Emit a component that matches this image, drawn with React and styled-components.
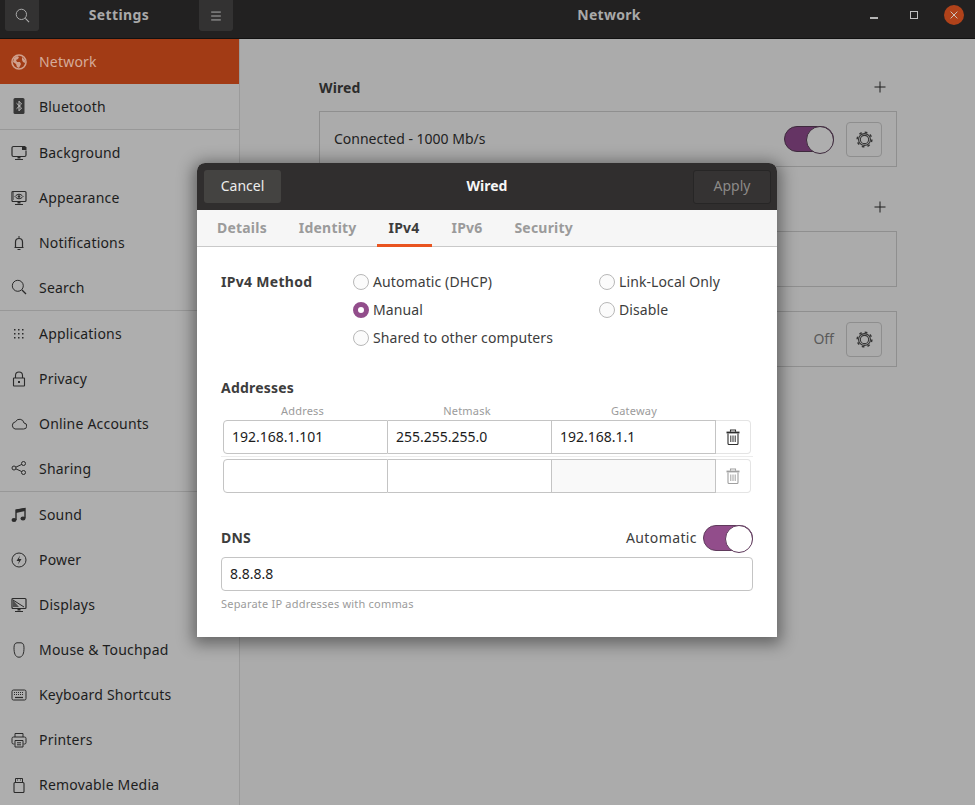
import styled, { createGlobalStyle } from 'styled-components';

const GlobalStyle = createGlobalStyle`
  html, body {
    margin: 0;
    padding: 0;
    background: #ababab;
  }
  * {
    box-sizing: border-box;
  }
`;

const Svg = ({ size = 16, children }) => (
  <svg width={size} height={size} viewBox="0 0 16 16" fill="none" stroke="currentColor" strokeWidth="1">
    {children}
  </svg>
);

const icons = {
  network: (
    <>
      <circle cx="8" cy="8" r="7" strokeWidth="1.6" />
      <path d="M3 4l3-2 2 1-1 2-2 1 1 2 3 0 1 2-2 4-2-1-1-3-3-2z" fill="currentColor" stroke="none" />
      <path d="M11 3l3 3 0 3-2-1-1-2z" fill="currentColor" stroke="none" />
    </>
  ),
  bluetooth: (
    <>
      <rect x="2.5" y="0" width="11" height="16" rx="1.5" fill="#2b2b2b" stroke="none" />
      <path d="M5.5 5.2L10.5 10 8 12.8V3.2L10.5 6 5.5 10.8" stroke="#cfcfcf" strokeWidth="0.9" />
    </>
  ),
  background: (
    <>
      <path d="M11 1.5H2.5a1.5 1.5 0 0 0-1.5 1.5v7a1.5 1.5 0 0 0 1.5 1.5h11a1.5 1.5 0 0 0 1.5-1.5V5.5" strokeWidth="1.2" />
      <path d="M11 1h3l1.500 1.500V5h-4.500z" fill="currentColor" stroke="none" />
      <path d="M6.500 11.500h3v2h-3z" fill="currentColor" stroke="none" />
      <path d="M4 14h8v1H4z" fill="currentColor" stroke="none" />
    </>
  ),
  appearance: (
    <>
      <rect x="1" y="1.500" width="14" height="10" rx="1" strokeWidth="1.200" />
      <path d="M4 6.500c2.500-3 5.500-3 8 0-2.500 3-5.500 3-8 0z" />
      <circle cx="8" cy="6.500" r="1.300" fill="currentColor" stroke="none" />
      <path d="M2 3h1M2 5h1M2 7h1M2 9h1" />
      <path d="M6.500 11.500h3v2h-3zM4 14h8v1H4z" fill="currentColor" stroke="none" />
    </>
  ),
  bell: (
    <>
      <path d="M3.500 12.500h9M4.500 12V7a3.500 3.500 0 0 1 7 0v5" strokeWidth="1.200" />
      <path d="M7 2h2M6.500 14.500h3" strokeWidth="1.200" />
    </>
  ),
  search: (
    <>
      <circle cx="6.800" cy="6.800" r="5.500" strokeWidth="1" />
      <path d="M11 11l4 4" strokeWidth="1.200" />
    </>
  ),
  apps: (
    <path
      d="M3 3h1.500v1.500H3zM7 3h1.500v1.500H7zM11 3h1.500v1.500H11zM3 7h1.500v1.500H3zM7 7h1.500v1.500H7zM11 7h1.500v1.500H11zM3 11h1.500v1.500H3zM7 11h1.500v1.500H7zM11 11h1.500v1.500H11z"
      fill="currentColor"
      stroke="none"
    />
  ),
  lock: (
    <>
      <rect x="2.500" y="7" width="11" height="8" rx=".5" strokeWidth="1.100" />
      <path d="M4.500 7V4.500a3.500 3.500 0 0 1 7 0V7" strokeWidth="1.100" />
      <rect x="7" y="10" width="2" height="2" fill="currentColor" stroke="none" />
    </>
  ),
  cloud: (
    <path d="M4 13h8.500a3 3 0 0 0 .5-6 4.500 4.500 0 0 0-8.500-1.200A3.700 3.700 0 0 0 4 13z" strokeWidth="1" />
  ),
  share: (
    <>
      <circle cx="3" cy="8" r="2" />
      <circle cx="12.500" cy="3.500" r="2" />
      <circle cx="12.500" cy="12.500" r="2" />
      <path d="M4.800 7.200l6-2.800M4.800 8.800l6 2.800" />
    </>
  ),
  music: (
    <>
      <path d="M5 13V3.200L14 1.500V11" strokeWidth="1.400" />
      <path d="M5 2.800L14 1v3L5 6z" fill="currentColor" stroke="none" />
      <ellipse cx="3" cy="13" rx="2.500" ry="2" fill="currentColor" stroke="none" />
      <ellipse cx="12" cy="11.500" rx="2.500" ry="2" fill="currentColor" stroke="none" />
    </>
  ),
  power: (
    <>
      <circle cx="8" cy="8" r="7" strokeWidth="1" />
      <path d="M9 3.500L5.500 9H8l-1 3.500L10.500 7H8z" fill="currentColor" stroke="none" />
    </>
  ),
  display: (
    <>
      <rect x="1" y="1.500" width="14" height="10" rx="1" strokeWidth="1.200" />
      <path d="M2 3l6 7H2z" fill="currentColor" stroke="none" opacity=".7" />
      <path d="M2 3l11 7" />
      <path d="M6.500 11.500h3v2h-3zM4 14h8v1H4z" fill="currentColor" stroke="none" />
    </>
  ),
  mouse: (
    <path d="M6 .8h4c2 0 3 2 3 5 0 5-1 9.400-5 9.400S3 10.800 3 5.800c0-3 1-5 3-5z" strokeWidth="1" />
  ),
  keyboard: (
    <>
      <rect x="1" y="3" width="14" height="10" rx="1.500" strokeWidth="1" />
      <path d="M3 5.500h10M3 7.500h10" strokeDasharray="1 1" />
      <path d="M4 10.500h8" strokeWidth="1.200" />
    </>
  ),
  printer: (
    <>
      <path d="M4 5V1.500h8V5" />
      <path d="M3.500 12H2.500a1.500 1.500 0 0 1-1.500-1.500V6.500A1.500 1.500 0 0 1 2.500 5h11A1.500 1.500 0 0 1 15 6.500v4a1.500 1.500 0 0 1-1.500 1.500h-1" />
      <path d="M4 8.500h8v6.500H4z" />
      <path d="M6 10.800h4M6 12.800h4" />
    </>
  ),
  usb: (
    <>
      <rect x="3" y="5.500" width="10" height="10" rx="1" strokeWidth="1.100" />
      <path d="M4.500 5.500V1.500h7v4" />
      <path d="M6 3h1M9 3h1" />
    </>
  ),
  menu: <path d="M2.500 3.500h11M2.500 8h11M2.500 12.500h11" strokeWidth="1.100" />,
  plus: <path d="M8 2.500v11M2.500 8h11" strokeWidth="1" />,
  gear: (
    <>
      <circle cx="8" cy="8" r="6.900" strokeWidth="1.400" strokeDasharray="2.500 2.920" />
      <circle cx="8" cy="8" r="5.600" strokeWidth="1.100" />
      <circle cx="8" cy="8" r="3.900" strokeWidth="1" />
    </>
  ),
  trash: (
    <>
      <path d="M1.500 3.500h13" strokeWidth="1.800" />
      <path d="M5.500 2.800V1h5v1.800" strokeWidth="1.100" />
      <path d="M3 4.500v10a1 1 0 0 0 1 1h8a1 1 0 0 0 1-1v-10" strokeWidth="1.100" />
      <path d="M5.800 6.500v6.500M8 6.500v6.500M10.200 6.500v6.500" strokeWidth="1" />
    </>
  ),
  close: <path d="M3.500 3.500l9 9M12.500 3.500l-9 9" strokeWidth="1.300" />,
};

const Icon = ({ name, size }) => <Svg size={size}>{icons[name]}</Svg>;

const sideItems = [
  { icon: 'network', label: 'Network', active: true },
  { icon: 'bluetooth', label: 'Bluetooth', divider: true },
  { icon: 'background', label: 'Background' },
  { icon: 'appearance', label: 'Appearance' },
  { icon: 'bell', label: 'Notifications' },
  { icon: 'search', label: 'Search', divider: true },
  { icon: 'apps', label: 'Applications' },
  { icon: 'lock', label: 'Privacy' },
  { icon: 'cloud', label: 'Online Accounts' },
  { icon: 'share', label: 'Sharing', divider: true },
  { icon: 'music', label: 'Sound' },
  { icon: 'power', label: 'Power' },
  { icon: 'display', label: 'Displays' },
  { icon: 'mouse', label: 'Mouse & Touchpad' },
  { icon: 'keyboard', label: 'Keyboard Shortcuts' },
  { icon: 'printer', label: 'Printers' },
  { icon: 'usb', label: 'Removable Media' },
];

function App() {
  return (
    <Shell>
      <GlobalStyle />
      <TitleBar>
        <TitleLeft>
          <HeaderButton><Icon name="search" size={15} /></HeaderButton>
          <AppTitle>Settings</AppTitle>
          <HeaderButton><Icon name="menu" size={14} /></HeaderButton>
        </TitleLeft>
        <TitleRight>
          <PanelTitle>Network</PanelTitle>
          <WindowButtons>
            <MinimizeMark />
            <MaximizeMark />
            <CloseButton><Icon name="close" size={12} /></CloseButton>
          </WindowButtons>
        </TitleRight>
      </TitleBar>
      <Body>
        <Sidebar>
          {sideItems.map(item => (
            <SideRow key={item.label} $active={item.active} $divider={item.divider}>
              <SideIcon><Icon name={item.icon} /></SideIcon>
              {item.label}
            </SideRow>
          ))}
        </Sidebar>
        <Panel>
          <SectionHead>
            <SectionTitle>Wired</SectionTitle>
            <PlusIcon><Icon name="plus" size={16} /></PlusIcon>
          </SectionHead>
          <Frame>
            <FrameLabel>Connected - 1000 Mb/s</FrameLabel>
            <Toggle $dim />
            <GearButton><Icon name="gear" size={17} /></GearButton>
          </Frame>
          <SectionHead $spaced>
            <PlusIcon><Icon name="plus" size={16} /></PlusIcon>
          </SectionHead>
          <Frame />
          <Frame $spaced>
            <OffLabel>Off</OffLabel>
            <GearButton><Icon name="gear" size={17} /></GearButton>
          </Frame>
        </Panel>
      </Body>

      <Dialog>
        <DialogBar>
          <CancelButton>Cancel</CancelButton>
          <DialogTitle>Wired</DialogTitle>
          <ApplyButton>Apply</ApplyButton>
        </DialogBar>
        <Tabs>
          <Tab>Details</Tab>
          <Tab>Identity</Tab>
          <Tab $active>IPv4</Tab>
          <Tab>IPv6</Tab>
          <Tab>Security</Tab>
        </Tabs>
        <DialogBody>
          <MethodRow>
            <MethodLabel>IPv4 Method</MethodLabel>
            <RadioGrid>
              <RadioItem><Radio /><RadioText>Automatic (DHCP)</RadioText></RadioItem>
              <RadioItem><Radio /><RadioText>Link-Local Only</RadioText></RadioItem>
              <RadioItem><Radio $checked /><RadioText>Manual</RadioText></RadioItem>
              <RadioItem><Radio /><RadioText>Disable</RadioText></RadioItem>
              <RadioItem><Radio /><RadioText>Shared to other computers</RadioText></RadioItem>
            </RadioGrid>
          </MethodRow>

          <AddressHeading>Addresses</AddressHeading>
          <ColumnHeads>
            <ColumnHead>Address</ColumnHead>
            <ColumnHead>Netmask</ColumnHead>
            <ColumnHead>Gateway</ColumnHead>
          </ColumnHeads>
          <AddressRow>
            <Cell>192.168.1.101</Cell>
            <Cell>255.255.255.0</Cell>
            <Cell>192.168.1.1</Cell>
            <TrashCell><Icon name="trash" size={16} /></TrashCell>
          </AddressRow>
          <RowRule />
          <AddressRow>
            <Cell />
            <Cell />
            <Cell $disabled />
            <TrashCell $disabled><Icon name="trash" size={16} /></TrashCell>
          </AddressRow>

          <DnsHead>
            <BoldLabel>DNS</BoldLabel>
            <AutoWrap>
              <AutoText>Automatic</AutoText>
              <Toggle />
            </AutoWrap>
          </DnsHead>
          <DnsInput>8.8.8.8</DnsInput>
          <Hint>Separate IP addresses with commas</Hint>
        </DialogBody>
      </Dialog>
    </Shell>
  );
}

const Shell = styled.div`
  position: relative;
  width: 975px;
  height: 805px;
  overflow: hidden;
  display: flex;
  flex-direction: column;
  font-family: 'Noto Sans', 'Open Sans', sans-serif;
  font-size: 14px;
  background: #ababab;
`;

const TitleBar = styled.div`
  display: flex;
  flex: none;
  height: 39px;
  background: #222121;
  border-bottom: 1px solid #111111;
`;

const TitleLeft = styled.div`
  display: flex;
  justify-content: space-between;
  width: 240px;
  padding: 0 7px 0 5px;
`;

const HeaderButton = styled.div`
  display: flex;
  align-items: center;
  justify-content: center;
  width: 34px;
  height: 31px;
  background: #333232;
  border-radius: 0 0 3px 3px;
  color: #b0b0b0;
`;

const AppTitle = styled.div`
  line-height: 30px;
  font-weight: 700;
  font-size: 14px;
  color: #a9a9a9;
  letter-spacing: 0.4px;
`;

const TitleRight = styled.div`
  position: relative;
  flex: 1;
  display: flex;
  justify-content: flex-end;
  align-items: center;
`;

const PanelTitle = styled.div`
  position: absolute;
  left: 3px;
  right: 0;
  top: 0;
  line-height: 30px;
  text-align: center;
  font-weight: 700;
  font-size: 14px;
  color: #a9a9a9;
  letter-spacing: 0.3px;
`;

const WindowButtons = styled.div`
  display: flex;
  align-items: center;
  gap: 26px;
  padding: 0 11px 8px 0;
`;

const MinimizeMark = styled.div`
  width: 8px;
  height: 2px;
  margin-top: 5px;
  background: #b5b5b5;
`;

const MaximizeMark = styled.div`
  width: 8px;
  height: 8px;
  margin-left: 6px;
  border: 1px solid #c0c0c0;
`;

const CloseButton = styled.div`
  display: flex;
  align-items: center;
  justify-content: center;
  width: 20px;
  height: 20px;
  border-radius: 50%;
  background: #b0421a;
  color: #cfc5c0;
`;

const Body = styled.div`
  flex: 1;
  display: flex;
  min-height: 0;
`;

const Sidebar = styled.div`
  flex: none;
  width: 240px;
  background: #aeaeae;
  border-right: 1px solid #9b9b9b;
  letter-spacing: 0.2px;
`;

const SideRow = styled.div`
  display: flex;
  align-items: center;
  height: ${props => (props.$divider ? 46 : 45)}px;
  padding-left: 11px;
  padding-bottom: ${props => (props.$divider ? 1 : 0)}px;
  color: ${props => (props.$active ? '#d5ab9a' : '#1d1d1d')};
  background: ${props => (props.$active ? '#a23b15' : 'transparent')};
  border-bottom: ${props => (props.$divider ? '1px solid #989898' : 'none')};
`;

const SideIcon = styled.span`
  display: flex;
  width: 28px;
  color: inherit;
  opacity: 0.9;
`;

const Panel = styled.div`
  flex: 1;
  padding: 36px 78px 0 79px;
`;

const SectionHead = styled.div`
  display: flex;
  align-items: center;
  height: 24px;
  margin-top: ${props => (props.$spaced ? 28 : 0)}px;
  margin-bottom: 12px;
`;

const SectionTitle = styled.div`
  font-weight: 700;
  color: #2c2c2c;
  letter-spacing: 0.1px;
`;

const PlusIcon = styled.span`
  display: flex;
  margin-left: auto;
  margin-right: 9px;
  color: #1e1e1e;
`;

const Frame = styled.div`
  display: flex;
  align-items: center;
  height: 56px;
  margin-top: ${props => (props.$spaced ? 24 : 0)}px;
  padding: 0 14px;
  border: 1px solid #8f8f8f;
`;

const FrameLabel = styled.div`
  flex: 1;
  padding-bottom: 2px;
  color: #222;
`;

const OffLabel = styled.div`
  margin-left: auto;
  padding-bottom: 2px;
  color: #5a5a5a;
`;

const Toggle = styled.div`
  position: relative;
  width: 50px;
  height: 26px;
  border-radius: 13px;
  background: ${props => (props.$dim ? '#653464' : '#924d8b')};
  border: 1px solid ${props => (props.$dim ? '#3e2a3d' : '#5f3a5c')};

  &::after {
    content: '';
    position: absolute;
    top: -1px;
    right: -1px;
    width: 26px;
    height: 26px;
    border-radius: 50%;
    background: ${props => (props.$dim ? '#aeaeae' : '#ffffff')};
    border: 1px solid ${props => (props.$dim ? '#3e2a3d' : '#5f3a5c')};
  }
`;

const GearButton = styled.div`
  display: flex;
  align-items: center;
  justify-content: center;
  width: 36px;
  height: 35px;
  margin-left: 12px;
  border: 1px solid #8e8e8e;
  border-radius: 4px;
  background: #ababab;
  color: #353535;
`;

const Dialog = styled.div`
  position: absolute;
  left: 197px;
  top: 163px;
  width: 580px;
  background: #fff;
  border-radius: 8px 8px 0 0;
  box-shadow: 0 3px 16px 4px rgba(0, 0, 0, 0.42);
  color: #3d3d3d;
`;

const DialogBar = styled.div`
  display: flex;
  align-items: center;
  justify-content: space-between;
  height: 47px;
  padding: 0 6px 0 7px;
  background: #302e2e;
  border-radius: 8px 8px 0 0;
`;

const CancelButton = styled.div`
  display: flex;
  align-items: center;
  justify-content: center;
  width: 77px;
  height: 33px;
  padding-bottom: 2px;
  border-radius: 3px;
  background: #444341;
  color: #ececec;
`;

const ApplyButton = styled.div`
  display: flex;
  align-items: center;
  justify-content: center;
  width: 78px;
  height: 34px;
  padding-bottom: 2px;
  border-radius: 3px;
  background: #353333;
  border: 1px solid #272626;
  color: #8c8a88;
`;

const DialogTitle = styled.div`
  padding-bottom: 2px;
  font-weight: 700;
  color: #f6f6f6;
`;

const Tabs = styled.div`
  display: flex;
  justify-content: flex-start;
  gap: 8px;
  height: 37px;
  padding-left: 8px;
  background: #f6f6f6;
  border-bottom: 1px solid #c9c9c9;
`;

const Tab = styled.div`
  display: flex;
  align-items: center;
  height: 37px;
  padding: 0 12px;
  font-weight: 700;
  letter-spacing: 0.2px;
  color: ${props => (props.$active ? '#3d3d3d' : '#9b9b9b')};
  border-bottom: 3px solid ${props => (props.$active ? '#e95420' : 'transparent')};
`;

const DialogBody = styled.div`
  padding: 25px 24px 26px;
`;

const MethodRow = styled.div`
  display: flex;
`;

const BoldLabel = styled.div`
  font-weight: 700;
  color: #3d3d3d;
  line-height: 20px;
  letter-spacing: 0.2px;
`;

const MethodLabel = styled(BoldLabel)`
  flex: none;
  width: 132px;
  letter-spacing: 0.3px;
`;

const RadioGrid = styled.div`
  display: grid;
  grid-template-columns: 246px auto;
  row-gap: 8px;
`;

const RadioItem = styled.div`
  display: flex;
  align-items: center;
  gap: 4px;
  height: 20px;
`;

const RadioText = styled.span`
  padding-bottom: 2px;
  letter-spacing: 0.1px;
`;

const Radio = styled.span`
  display: block;
  flex: none;
  width: 16px;
  height: 16px;
  border-radius: 50%;
  background: ${props => (props.$checked ? '#ffffff' : '#fbfbfb')};
  border: ${props => (props.$checked ? '5px solid #924d8b' : '1px solid #b8b8b8')};
`;

const AddressHeading = styled(BoldLabel)`
  margin-top: 30px;
  margin-bottom: 6px;
`;

const ColumnHeads = styled.div`
  display: grid;
  grid-template-columns: 159px 170px 164px;
  margin: 0 2px 2px;
`;

const ColumnHead = styled.div`
  height: 14px;
  line-height: 14px;
  text-align: center;
  font-size: 11px;
  letter-spacing: 0.2px;
  color: #9b9b9b;
`;

const AddressRow = styled.div`
  display: grid;
  grid-template-columns: 165px 164px 164px 35px;
  height: 34px;
  margin: 0 2px;
`;

const Cell = styled.div`
  display: flex;
  align-items: center;
  padding: 0 0 2px 8px;
  color: #1c1c1c;
  background: ${props => (props.$disabled ? '#f9f9f9' : '#ffffff')};
  border: 1px solid #c4c4c4;
  border-left-width: 0;

  &:first-child {
    border-left-width: 1px;
    border-radius: 4px 0 0 4px;
  }
`;

const TrashCell = styled.div`
  display: flex;
  align-items: center;
  justify-content: center;
  border: 1px solid #e4e4e4;
  border-left-width: 0;
  border-radius: 0 4px 4px 0;
  color: ${props => (props.$disabled ? '#a0a0a0' : '#2e2e2e')};
`;

const RowRule = styled.div`
  height: 1px;
  margin: 2px 0;
  background: #ececec;
`;

const DnsHead = styled.div`
  display: flex;
  align-items: center;
  justify-content: space-between;
  margin-top: 32px;
  margin-bottom: 6px;
`;

const AutoWrap = styled.div`
  display: flex;
  align-items: center;
  gap: 6px;
`;

const AutoText = styled.span`
  padding-bottom: 2px;
  letter-spacing: 0.4px;
`;

const DnsInput = styled.div`
  display: flex;
  align-items: center;
  height: 34px;
  padding: 0 0 2px 8px;
  border: 1px solid #c4c4c4;
  border-radius: 4px;
  color: #1c1c1c;
`;

const Hint = styled.div`
  height: 14px;
  margin-top: 6px;
  line-height: 14px;
  font-size: 11px;
  letter-spacing: 0.2px;
  color: #9b9b9b;
`;

export default App;
